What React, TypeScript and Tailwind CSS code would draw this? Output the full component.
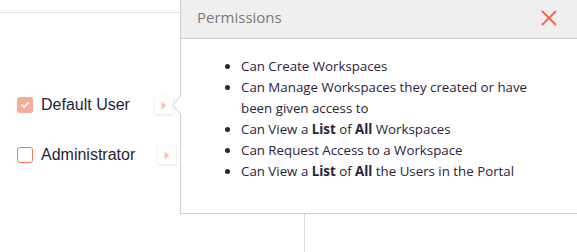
import { X } from "lucide-react";

const roles = [
  { name: "Default User", checked: true, arrowX: "ml-[25px]" },
  { name: "Administrator", checked: false, arrowX: "ml-[23px]" },
];

function Checkbox({ checked }: { checked: boolean }) {
  if (checked) {
    return (
      <span className="w-[16px] h-[16px] rounded-[3px] bg-[#f6ad97] flex items-center justify-center shrink-0">
        <svg width="10" height="10" viewBox="0 0 10 10">
          <path d="M2 5.2 L4.2 7.2 L8 3" fill="none" stroke="#fff" strokeWidth="1.8" strokeLinecap="round" strokeLinejoin="round" />
        </svg>
      </span>
    );
  }
  return <span className="w-[16px] h-[16px] rounded-[3px] border border-[#ee7a58] bg-white shrink-0" />;
}

function ArrowButton() {
  return (
    <span className="w-[18px] h-[18px] bg-white shadow-[0_1px_3px_rgba(0,0,0,0.12)] flex items-center justify-center">
      <svg width="6" height="9" viewBox="0 0 6 9">
        <path d="M0.5 0.5 L5.5 4.5 L0.5 8.5 Z" fill="#f8c3b2" />
      </svg>
    </span>
  );
}

export default function App() {
  return (
    <div className="w-[577px] h-[252px] bg-white relative overflow-hidden font-['Open_Sans',sans-serif]">
      <div className="h-[13px] border-b border-[#e3e3e3]" />
      <div className="flex h-[239px]">
        <div className="w-[305px] border-r border-[#dcdcdc] flex flex-col pt-[82px] pl-[17px] gap-[30px]">
          {roles.map((r) => (
            <div key={r.name} className="flex items-center h-[20px]">
              <Checkbox checked={r.checked} />
              <span className="ml-[8px] text-[16px] text-[#1f1f3a] font-['Liberation_Sans',Arial,sans-serif]">
                {r.name}
              </span>
              <span className={r.arrowX}>
                <ArrowButton />
              </span>
            </div>
          ))}
        </div>
      </div>

      {/* permissions popover */}
      <div className="absolute left-[180px] top-[-1px] w-[420px] h-[215px] bg-white border border-[#cfcfcf] flex flex-col">
        <div className="absolute left-[-9px] top-[95px] w-0 h-0 border-y-[10px] border-y-transparent border-r-[9px] border-r-[#cfcfcf]" />
        <div className="absolute left-[-8px] top-[95px] w-0 h-0 border-y-[10px] border-y-transparent border-r-[9px] border-r-white" />
        <div className="h-[39px] bg-[#efefef] border-b border-[#cccccc] flex items-center justify-between pl-[16px] pr-[37px] pb-[3px] shrink-0">
          <span className="text-[15px] text-[#7a7a7a]">Permissions</span>
          <X className="w-[26px] h-[26px] text-[#f0683f]" strokeWidth={1.7} />
        </div>
        <ul className="list-disc pl-[60px] pt-[17px] w-[354px] text-[13.3px] leading-[21px] text-[#2a2438]">
          <li>Can Create Workspaces</li>
          <li>Can Manage Workspaces they created or have been given access to</li>
          <li>
            Can View a <b>List</b> of <b>All</b> Workspaces
          </li>
          <li>Can Request Access to a Workspace</li>
          <li>
            Can View a <b>List</b> of <b>All</b> the Users in the Portal
          </li>
        </ul>
      </div>
    </div>
  );
}
